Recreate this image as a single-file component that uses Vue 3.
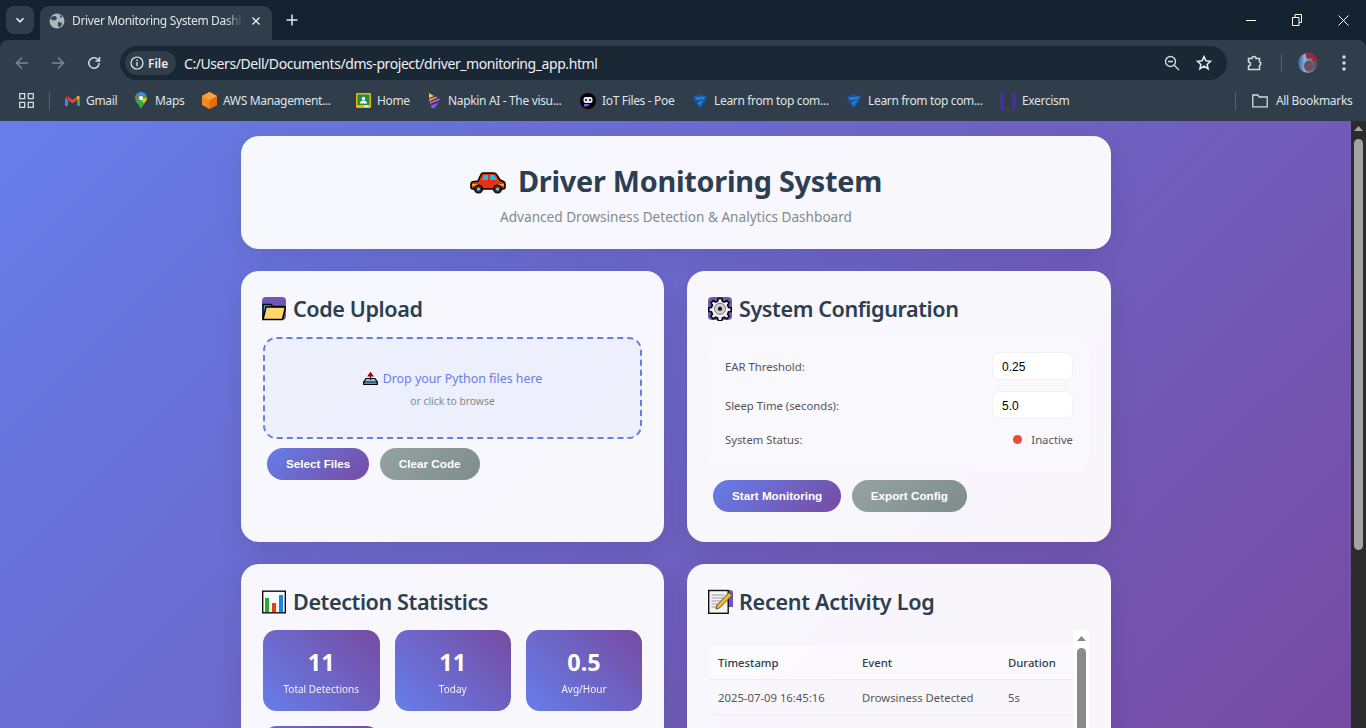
<template>
  <div class="window">
    <div class="tabstrip">
      <button class="tab-search">
        <svg width="10" height="10" viewBox="0 0 10 10"><path d="M1.500 3.200 5 6.800l3.500-3.600" fill="none" stroke="#e6eaee" stroke-width="1.600" /></svg>
      </button>
      <div class="tab">
        <svg class="globe" width="16" height="16" viewBox="0 0 16 16">
          <circle cx="8" cy="8" r="7.500" fill="#aeb6bd" />
          <path d="M3 3.500 6.500 3l1.500 2-1 2-3 .5-3-2zM9 9l3.500.5.5 2-2.500 3-1.500-1.500zM10.500 1.500l3 2.500-2 1z" fill="#3a4855" />
        </svg>
        <span class="tab-title">Driver Monitoring System Dashl</span>
        <svg class="tab-close" width="10" height="10" viewBox="0 0 10 10"><path d="M1.500 1.500l7 7m0-7-7 7" stroke="#e6eaee" stroke-width="1.400" /></svg>
      </div>
      <svg class="new-tab" width="12" height="12" viewBox="0 0 12 12"><path d="M6 .5v11M.5 6h11" stroke="#e6eaee" stroke-width="1.500" /></svg>
      <div class="win-controls">
        <svg width="10" height="10" viewBox="0 0 10 10"><path d="M0 5.500h10" stroke="#fff" /></svg>
        <svg width="10" height="12" viewBox="0 0 10 12"><path d="M.5 3.500h6.500v8H.5zM3 3.500V.5h6.500v8H7" fill="none" stroke="#fff" /></svg>
        <svg width="11" height="11" viewBox="0 0 11 11"><path d="M.5.5l10 10m0-10-10 10" stroke="#fff" /></svg>
      </div>
    </div>

    <div class="toolbar">
      <svg class="nav" width="16" height="16" viewBox="0 0 16 16"><path d="M14 8H2.500M8 2.500 2.500 8 8 13.500" fill="none" stroke="#7c8792" stroke-width="1.500" /></svg>
      <svg class="nav" width="16" height="16" viewBox="0 0 16 16"><path d="M2 8h11.500M8 2.500 13.500 8 8 13.500" fill="none" stroke="#7c8792" stroke-width="1.500" /></svg>
      <svg class="nav" width="16" height="16" viewBox="0 0 16 16"><path d="M13.200 8a5.200 5.200 0 1 1-1.500-3.700L13.500 6M13.500 2v4h-4" fill="none" stroke="#d5dadf" stroke-width="1.500" /></svg>
      <div class="omnibox">
        <div class="file-chip">
          <svg width="14" height="14" viewBox="0 0 14 14"><circle cx="7" cy="7" r="6" fill="none" stroke="#e6eaee" stroke-width="1.200" /><path d="M7 6v4.200M7 3.600v1.300" stroke="#e6eaee" stroke-width="1.300" /></svg>
          <span>File</span>
        </div>
        <span class="url">C:/Users/Dell/Documents/dms-project/driver_monitoring_app.html</span>
        <svg class="omni-icon" width="16" height="16" viewBox="0 0 16 16"><circle cx="6.500" cy="6.500" r="5" fill="none" stroke="#d5dadf" stroke-width="1.400" /><path d="M10 10l5 5M4 6.500h5" stroke="#d5dadf" stroke-width="1.400" /></svg>
        <svg class="omni-star" width="16" height="16" viewBox="0 0 16 16"><path d="M8 1.600l1.900 4.200 4.600.5-3.400 3.100 1 4.500L8 11.100l-4.100 2.800 1-4.500L1.500 6.300l4.600-.5z" fill="none" stroke="#e6eaee" stroke-width="1.500" /></svg>
      </div>
      <svg class="ext" width="18" height="18" viewBox="0 0 18 18"><path d="M2.500 4.500h3.500a2 2 0 0 1 4 0h3.500v3.500a1.800 1.800 0 0 1 0 3.500v4h-11v-3.500a2 2 0 0 0 0-4z" fill="none" stroke="#d5dadf" stroke-width="1.500" /></svg>
      <span class="tool-sep"></span>
      <svg class="avatar" width="20" height="20" viewBox="0 0 20 20">
        <defs>
          <clipPath id="av"><circle cx="10" cy="10" r="10" /></clipPath>
          <linearGradient id="avbg" x1="0" y1="0" x2="1" y2="0">
            <stop offset="0" stop-color="#2f5f9e" />
            <stop offset=".35" stop-color="#8db4e0" />
            <stop offset="1" stop-color="#4d3a4a" />
          </linearGradient>
        </defs>
        <g clip-path="url(#av)">
          <rect width="20" height="20" fill="url(#avbg)" />
          <path d="M7 0h13v7l-4 2-3-4-4 1z" fill="#a32434" />
          <ellipse cx="10.500" cy="13" rx="4.500" ry="5.500" fill="#6d5160" />
          <path d="M0 12l4 8H0z" fill="#23406c" />
        </g>
      </svg>
      <svg class="menu" width="4" height="16" viewBox="0 0 4 16"><circle cx="2" cy="2" r="1.700" fill="#d5dadf" /><circle cx="2" cy="8" r="1.700" fill="#d5dadf" /><circle cx="2" cy="14" r="1.700" fill="#d5dadf" /></svg>
    </div>

    <div class="bookmarks">
      <svg class="apps" width="15" height="15" viewBox="0 0 15 15"><path d="M.7.7h5v5h-5zM9.300.7h5v5h-5zM.7 9.300h5v5h-5zM9.300 9.300h5v5h-5z" fill="none" stroke="#d5dadf" stroke-width="1.300" /></svg>
      <span class="bm-sep"></span>
      <div v-for="b in bookmarks" :key="b.left" class="bookmark" :style="{ width: b.width + 'px' }">
        <span class="fav" v-html="b.icon"></span>
        <span>{{ b.label }}</span>
      </div>
      <span class="bm-sep end"></span>
      <div class="all-bm">
        <svg width="16" height="14" viewBox="0 0 16 14"><path d="M.8 12.800V1h5l1.500 2h7.900v9.800z" fill="none" stroke="#d5dadf" stroke-width="1.300" /></svg>
        <span>All Bookmarks</span>
      </div>
    </div>

    <div class="viewport">
      <div class="page">
        <header class="card head">
          <h1>
            <svg class="car" width="36" height="22" viewBox="0 0 36 22">
              <path d="M8 9 11 2.500Q11.500 1 13.500 1h10q2 0 3 1.500L30 8l3.500 1.500q1.500.7 1.500 2.500v3q0 2-2 2H3q-2 0-2-2v-2.500Q1 10 3 9.700z" fill="#e8320f" stroke="#000" stroke-width="1.600" />
              <path d="M12 8l2-5h4v5zM20 3h4.500l2.500 5h-7z" fill="#22b8ee" />
              <path d="M2 13h6M28 13h6" stroke="#ffb000" stroke-width="2" />
              <circle cx="8.500" cy="17" r="4" fill="#333" stroke="#000" stroke-width="1.200" /><circle cx="8.500" cy="17" r="1.500" fill="#bbb" />
              <circle cx="27.500" cy="17" r="4" fill="#333" stroke="#000" stroke-width="1.200" /><circle cx="27.500" cy="17" r="1.500" fill="#bbb" />
            </svg>
            <span>Driver Monitoring System</span>
          </h1>
          <p>Advanced Drowsiness Detection &amp; Analytics Dashboard</p>
        </header>

        <div class="grid">
          <section class="card">
            <h2>
              <svg class="emoji" width="24" height="24" viewBox="0 0 24 24">
                <rect width="24" height="23" rx="4" fill="#6f58b5" />
                <path d="M1 22V7.500h8l1.500 2H22v3" fill="#29a3d8" stroke="#000" stroke-width="1.300" />
                <path d="M1 22.500 4 10h19.500l-3 12.500z" fill="#ffd76e" stroke="#000" stroke-width="1.500" />
              </svg>
              <span>Code Upload</span>
            </h2>
            <div class="dropzone">
              <div class="drop-main">
                <svg width="15" height="13" viewBox="0 0 15 13">
                  <path d="M.7 12.300V10L3 6.500h9L14.300 10v2.300z" fill="#7cc6ee" stroke="#000" stroke-width="1.200" />
                  <path d="M.7 10h13.600" stroke="#000" />
                  <path d="M7.500 8V3M5.300 3.800 7.500.8l2.200 3z" fill="#e0102a" stroke="#7a0010" stroke-width="1.200" />
                </svg>
                <span>Drop your Python files here</span>
              </div>
              <div class="drop-sub">or click to browse</div>
            </div>
            <div class="btns">
              <button class="btn primary">Select Files</button>
              <button class="btn muted">Clear Code</button>
            </div>
          </section>

          <section class="card">
            <h2>
              <svg class="emoji" width="24" height="24" viewBox="0 0 24 24">
                <rect width="24" height="23" rx="4" fill="#6f58b5" />
                <path d="M10 .8h4l.6 3 2.400 1 2.500-1.700 2.600 2.600-1.700 2.500 1 2.400 3 .6v4l-3 .6-1 2.400 1.700 2.500-2.600 2.600-2.500-1.700-2.400 1-.6 3h-4l-.6-3-2.400-1-2.500 1.700-2.600-2.600 1.700-2.500-1-2.400-3-.6v-4l3-.6 1-2.400-1.700-2.500 2.600-2.600L7 4.800l2.400-1z" transform="translate(1.200 .8) scale(.9)" fill="#f0f0f0" stroke="#000" stroke-width="1.700" />
                <circle cx="12" cy="11.800" r="5.500" fill="#d2d2d2" stroke="#777" />
                <circle cx="12" cy="11.800" r="2.200" fill="#222" />
              </svg>
              <span>System Configuration</span>
            </h2>
            <div class="config">
              <div class="cfg-row">
                <label>EAR Threshold:</label>
                <input class="cfg-input" type="text" value="0.25" />
              </div>
              <div class="cfg-row">
                <label>Sleep Time (seconds):</label>
                <input class="cfg-input" type="text" value="5.0" />
              </div>
              <div class="cfg-row status">
                <label>System Status:</label>
                <span class="status-val"><i class="dot"></i>Inactive</span>
              </div>
            </div>
            <div class="btns">
              <button class="btn primary">Start Monitoring</button>
              <button class="btn muted">Export Config</button>
            </div>
          </section>

          <section class="card tall">
            <h2>
              <svg class="emoji" width="24" height="24" viewBox="0 0 24 24">
                <rect x=".7" y="1.200" width="22.600" height="21.600" fill="#fafafa" stroke="#111" stroke-width="1.400" />
                <rect x="3" y="8" width="4" height="14" fill="#22b02a" />
                <rect x="10" y="13" width="4" height="9" fill="#ee3a1d" />
                <rect x="17" y="5" width="4" height="17" fill="#1d84dd" />
              </svg>
              <span>Detection Statistics</span>
            </h2>
            <div class="stats">
              <div v-for="s in stats" :key="s.label" class="stat">
                <div class="stat-val">{{ s.value }}</div>
                <div class="stat-label">{{ s.label }}</div>
              </div>
              <div class="stat"></div>
            </div>
          </section>

          <section class="card tall">
            <h2 class="tight">
              <svg class="emoji" width="25" height="25" viewBox="0 0 25 25">
                <path d="M16 1h6a3 3 0 0 1 3 3v14h-9z" fill="#6f58b5" />
                <rect x=".7" y="1.500" width="19.500" height="22.800" fill="#f4f4f4" stroke="#111" stroke-width="1.400" />
                <path d="M3.500 6h13M3.500 9h13M3.500 12h9M3.500 15h7M3.500 18h5" stroke="#9a9a9a" />
                <path d="M8 20l1-4L21 3.500l3 3L11.500 19z" fill="#f8b62c" stroke="#333" stroke-width=".8" />
              </svg>
              <span>Recent Activity Log</span>
            </h2>
            <div class="log">
              <div class="log-body">
                <table>
                  <thead>
                    <tr>
                      <th class="c1">Timestamp</th>
                      <th class="c2">Event</th>
                      <th>Duration</th>
                    </tr>
                  </thead>
                  <tbody>
                    <tr>
                      <td>2025-07-09 16:45:16</td>
                      <td>Drowsiness Detected</td>
                      <td>5s</td>
                    </tr>
                  </tbody>
                </table>
              </div>
              <div class="log-scroll">
                <svg width="15" height="17" viewBox="0 0 15 17"><path d="M3 11l4.500-5 4.500 5z" fill="#8a8a8a" /></svg>
                <div class="log-thumb"></div>
              </div>
            </div>
          </section>
        </div>
      </div>

      <div class="scrollbar">
        <svg width="15" height="17" viewBox="0 0 15 17"><path d="M3 10l4.500-5 4.500 5z" fill="#a3a3a3" /></svg>
        <div class="thumb"></div>
      </div>
    </div>
  </div>
</template>

<script setup>
const stats = [
  { value: "11", label: "Total Detections" },
  { value: "11", label: "Today" },
  { value: "0.5", label: "Avg/Hour" },
];

const learnIcon =
  '<svg width="16" height="16" viewBox="0 0 16 16"><path d="M1 3.500 8 1l7 2.500L13 9l-5 6.500L3 9z" fill="#14559f"/><path d="M2.500 4.500 13.500 3.500 12.500 6 4 7z" fill="#2a80d0"/><path d="M5.500 10 11.500 6.500 10 9.500 7.500 13z" fill="#2a80d0"/></svg>';

const bookmarks = [
  {
    left: 64,
    width: 69,
    label: "Gmail",
    icon: '<svg width="15" height="12" viewBox="0 0 15 12"><path d="M0 2.500V11h3V5z" fill="#4285f4"/><path d="M15 2.500V11h-3V5z" fill="#34a853"/><path d="M0 2.500 1.500.5 3 1.500v3.500z" fill="#c5221f"/><path d="M12 1.500 13.500.5 15 2.500 12 5z" fill="#fbbc04"/><path d="M3 1.500 7.500 5 12 1.500V5L7.500 8.500 3 5z" fill="#ea4335"/></svg>',
  },
  {
    left: 133,
    width: 68,
    label: "Maps",
    icon: '<svg width="12" height="17" viewBox="0 0 12 17"><path d="M6 0a6 6 0 0 1 6 6c0 4-4 6-6 11C4 12 0 10 0 6a6 6 0 0 1 6-6z" fill="#34a853"/><path d="M1 2.500 6 0l5 2-3 3z" fill="#4285f4"/><path d="M0 6l1-3.500L4 5z" fill="#ea4335"/><path d="M12 6c0 2-1.500 3.500-3 5L5 7z" fill="#fbbc04"/><circle cx="6" cy="6" r="2" fill="#fff"/></svg>',
  },
  {
    left: 201,
    width: 154,
    label: "AWS Management...",
    icon: '<svg width="15" height="17" viewBox="0 0 15 17"><path d="M7.500 0 15 4v9l-7.500 4L0 13V4z" fill="#f58a1f"/><path d="M7.500 8 15 4v9l-7.500 4z" fill="#e06d10"/><path d="M7.500 0 15 4 7.500 8 0 4z" fill="#f9a13f"/></svg>',
  },
  {
    left: 355,
    width: 71,
    label: "Home",
    icon: '<svg width="15" height="15" viewBox="0 0 15 15"><rect width="15" height="15" rx="1" fill="#f4b400"/><rect x="1.500" y="1.500" width="12" height="10.500" fill="#1f8e4d"/><circle cx="7.500" cy="5.500" r="1.700" fill="#fff"/><path d="M4 10.500a3.500 3 0 0 1 7 0z" fill="#fff"/><rect x="8.500" y="12.500" width="4" height="1.500" fill="#fff"/></svg>',
  },
  {
    left: 426,
    width: 154,
    label: "Napkin AI - The visu...",
    icon: '<svg width="14" height="17" viewBox="0 0 14 17"><path d="M2 1l5 3-5 2z" fill="#f6c945"/><path d="M2 7l7-2.500 1.500 1L2 9.500z" fill="#f0914a"/><path d="M3 10l9-3.500 1 1.500-10 4z" fill="#c55cc8"/><path d="M4 13.500l8-3-5 6-3-1z" fill="#8a5ae8"/></svg>',
  },
  {
    left: 580,
    width: 112,
    label: "IoT Files - Poe",
    icon: '<svg width="16" height="16" viewBox="0 0 16 16"><circle cx="8" cy="8" r="8" fill="#000"/><rect x="3.500" y="4" width="9" height="6" rx="2" fill="#e8e4f4"/><circle cx="6" cy="7" r="1" fill="#000"/><circle cx="10" cy="7" r="1" fill="#000"/><path d="M4 11h6l-3 2.500H4z" fill="#8a63e8"/></svg>',
  },
  { left: 692, width: 154, label: "Learn from top com...", icon: learnIcon },
  { left: 846, width: 154, label: "Learn from top com...", icon: learnIcon },
  {
    left: 1000,
    width: 100,
    label: "Exercism",
    icon: '<svg width="16" height="18" viewBox="0 0 16 18"><path d="M4.500 1H3.500Q2 1 2 3v4L.7 9 2 11v4q0 2 1.500 2h1M11.500 1h1Q14 1 14 3v4l1.300 2-1.300 2v4q0 2-1.500 2h-1" fill="none" stroke="#5a22e0" stroke-width="1.700"/><path d="M5 7.500l1.500-1L8 7.500M8.500 7.500l1.500-1 1 1M6 11.500h4" fill="none" stroke="#2c2a66" stroke-width=".9"/></svg>',
  },
];
</script>

<style>
html,
body {
  margin: 0;
  height: 100%;
  overflow: hidden;
}
</style>

<style scoped>
.window {
  width: 1366px;
  height: 728px;
  display: flex;
  flex-direction: column;
  font-family: "Noto Sans", "Open Sans", sans-serif;
  overflow: hidden;
  background: #152230;
}

.tabstrip {
  height: 40px;
  flex: none;
  display: flex;
  align-items: flex-start;
  padding: 6px 0 0 6px;
  box-sizing: border-box;
  background: #152230;
  color: #e6eaee;
}

.tab-search {
  width: 28px;
  height: 28px;
  border: 0;
  padding: 0;
  border-radius: 8px;
  background: #303e4c;
  display: flex;
  align-items: center;
  justify-content: center;
}

.tab {
  width: 232px;
  height: 34px;
  margin-left: 6px;
  box-sizing: border-box;
  background: #303e4c;
  border-radius: 9px 9px 0 0;
  display: flex;
  align-items: center;
  padding: 0 11px 5px 9px;
}

.tab-title {
  flex: 1;
  margin-left: 7px;
  font-size: 12px;
  line-height: 16px;
  letter-spacing: -0.35px;
  white-space: nowrap;
  overflow: hidden;
  color: #e0e4e8;
  mask-image: linear-gradient(90deg, #000 90%, transparent);
}

.tab-close {
  margin-left: 8px;
}

.new-tab {
  margin: 8px 0 0 14px;
}

.win-controls {
  margin-left: auto;
  height: 28px;
  display: flex;
  align-items: center;
  gap: 36px;
  padding-right: 17px;
}

.toolbar {
  height: 44px;
  flex: none;
  display: flex;
  align-items: center;
  box-sizing: border-box;
  background: #303e4c;
  border-radius: 8px 8px 0 0;
  padding: 6px 0 4px 14px;
}

.nav {
  margin-right: 20px;
}

.nav:nth-child(3) {
  margin-right: 18px;
}

.omnibox {
  width: 1107px;
  height: 34px;
  flex: none;
  display: flex;
  align-items: center;
  box-sizing: border-box;
  background: #1a2735;
  border-radius: 17px;
  padding: 0 15px 0 5px;
}

.file-chip {
  width: 51px;
  height: 24px;
  box-sizing: border-box;
  border-radius: 12px;
  background: #303e4c;
  display: flex;
  align-items: center;
  padding-left: 5px;
  gap: 4px;
  font-size: 12px;
  font-weight: 600;
  color: #e6eaee;
}

.url {
  margin-left: 8px;
  font-size: 14px;
  letter-spacing: -0.43px;
  color: #eef1f4;
  white-space: nowrap;
}

.omni-icon {
  margin-left: auto;
}

.omni-star {
  margin-left: 16px;
}

.ext {
  margin-left: 19px;
}

.tool-sep {
  width: 1px;
  height: 18px;
  background: #55616d;
  margin-left: 17px;
}

.avatar {
  margin-left: 16px;
}

.menu {
  margin-left: 24px;
}

.bookmarks {
  height: 37px;
  flex: none;
  box-sizing: border-box;
  display: flex;
  align-items: center;
  padding: 0 0 4px 19px;
  background: #303e4c;
  font-size: 12px;
  letter-spacing: -0.34px;
  color: #dfe3e7;
}

.bm-sep {
  width: 1px;
  height: 18px;
  background: #55616d;
  margin: 0 14px 0 15px;
}

.bm-sep.end {
  margin: 0 16px 0 135px;
}

.bookmark {
  flex: none;
  display: flex;
  align-items: center;
  gap: 6px;
  white-space: nowrap;
}

.fav {
  width: 16px;
  height: 16px;
  display: flex;
  align-items: center;
  justify-content: center;
}

.all-bm {
  display: flex;
  align-items: center;
  gap: 8px;
  white-space: nowrap;
}

.viewport {
  flex: 1;
  min-height: 0;
  display: flex;
}

.page {
  flex: 1;
  min-width: 0;
  overflow: hidden;
  padding: 15px 240px 0 241px;
  box-sizing: border-box;
  background: linear-gradient(135deg, #667eea 0%, #764ba2 100%);
}

.card {
  background: rgba(255, 255, 255, 0.95);
  border-radius: 18px;
  padding: 22.5px 22px;
  box-sizing: border-box;
  box-shadow: 0 7px 29px rgba(0, 0, 0, 0.1);
}

.head {
  height: 113px;
  text-align: center;
  margin-bottom: 22px;
}

h1 {
  margin: 0;
  display: flex;
  align-items: center;
  justify-content: center;
  gap: 12px;
  font-size: 28.8px;
  line-height: 44px;
  font-weight: 700;
  letter-spacing: -0.25px;
  color: #2c3e50;
}

.car {
  margin-top: 4px;
}

.head p {
  margin: 4px 0 0;
  font-size: 13.6px;
  line-height: 20px;
  color: #7f8c8d;
}

.grid {
  display: grid;
  grid-template-columns: 423px 424px;
  grid-template-rows: 271px auto;
  column-gap: 23px;
  row-gap: 22px;
}

.tall {
  height: 500px;
}

h2 {
  margin: 0 0 13.5px;
  display: flex;
  align-items: center;
  gap: 7px;
  font-size: 21.6px;
  line-height: 30px;
  font-weight: 600;
  color: #2c3e50;
  letter-spacing: -0.42px;
}

h2.tight {
  gap: 6px;
  letter-spacing: -0.3px;
}

.emoji {
  flex: none;
  margin-left: -1px;
}

.dropzone {
  height: 102px;
  box-sizing: border-box;
  border: 2px dashed #667eea;
  border-radius: 13.5px;
  background: rgba(102, 126, 234, 0.06);
  display: flex;
  flex-direction: column;
  align-items: center;
  justify-content: center;
  padding-top: 1px;
}

.drop-main {
  display: flex;
  align-items: center;
  gap: 5px;
  font-size: 12.4px;
  line-height: 20px;
  color: #667eea;
}

.drop-sub {
  margin-top: 4px;
  font-size: 10.3px;
  line-height: 16px;
  color: #7f8c8d;
}

.btns {
  display: flex;
  gap: 10.500px;
  margin: 9px 0 0 4px;
}

.btn {
  height: 32px;
  border: 0;
  border-radius: 16px;
  padding: 0 19px 2px;
  font-family: "Liberation Sans", Arial, sans-serif;
  font-size: 11.7px;
  font-weight: 700;
  color: #fff;
}

.primary {
  background: linear-gradient(135deg, #667eea, #764ba2);
}

.muted {
  background: linear-gradient(135deg, #95a3a1, #7f8c8d);
}

.config {
  height: 133px;
  box-sizing: border-box;
  padding: 15px 16px 0;
  border-radius: 13.5px;
  background: rgba(255, 255, 255, 0.22);
  font-size: 11.3px;
  color: #555;
}

.config + .btns {
  margin-top: 10px;
}

.cfg-row {
  display: flex;
  align-items: center;
  justify-content: space-between;
  height: 28px;
  margin-bottom: 11px;
}

.cfg-row.status {
  height: 18px;
}

.cfg-input {
  width: 81px;
  height: 28px;
  box-sizing: border-box;
  border: 1px solid #f0f0f5;
  border-radius: 7px;
  background: #fff;
  padding: 1px 9px 0;
  font-family: "Liberation Sans", Arial, sans-serif;
  font-size: 12px;
  color: #000;
  outline: none;
}

.status-val {
  display: flex;
  align-items: center;
}

.dot {
  width: 9px;
  height: 9px;
  border-radius: 50%;
  background: #e74c3c;
  margin-right: 9.500px;
}

.stats {
  display: grid;
  grid-template-columns: 116.500px 116.500px 116px;
  column-gap: 15px;
  row-gap: 15px;
}

.stat {
  height: 81px;
  box-sizing: border-box;
  border-radius: 13.5px;
  background: linear-gradient(45deg, #667eea 0%, #764ba2 100%);
  color: #fff;
  text-align: center;
  padding-top: 17px;
}

.stat-val {
  font-size: 23.4px;
  line-height: 30px;
  font-weight: 700;
}

.stat-label {
  margin-top: 5px;
  font-size: 10px;
  line-height: 14px;
  opacity: 0.9;
}

.log {
  display: flex;
  height: 200px;
}

.log-body {
  flex: 1;
  padding-top: 15px;
  min-width: 0;
}

table {
  width: 100%;
  border-collapse: collapse;
  font-size: 11.3px;
  color: #555;
}

th,
td {
  text-align: left;
  padding: 0 9px;
  border-bottom: 1px solid #eceef3;
}

th {
  height: 34px;
  font-weight: 500;
  color: #2c3e50;
  background: rgba(255, 255, 255, 0.4);
}

td {
  height: 34px;
}

.c1 {
  width: 126px;
}

.c2 {
  width: 128px;
}

.log-scroll {
  width: 15px;
  flex: none;
  background: #fff;
  display: flex;
  flex-direction: column;
  align-items: center;
}

.log-thumb {
  width: 9px;
  height: 160px;
  margin-top: 1px;
  border-radius: 5px 5px 0 0;
  background: #8a8a8a;
}

.scrollbar {
  width: 15px;
  flex: none;
  background: #2b2b2b;
  display: flex;
  flex-direction: column;
  align-items: center;
}

.thumb {
  width: 9px;
  height: 411px;
  margin-top: 1px;
  border-radius: 5px;
  background: #a3a3a3;
}
</style>
